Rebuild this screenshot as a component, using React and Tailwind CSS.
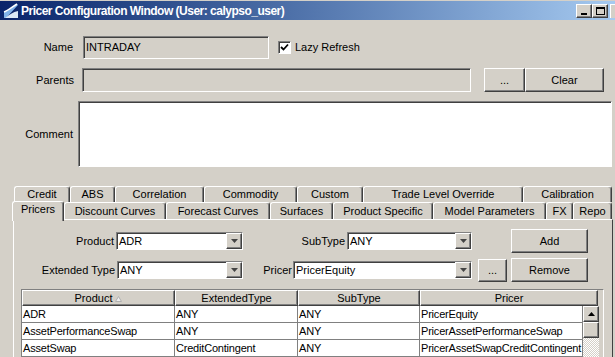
import React from 'react';

const raised =
  'border border-t-white border-l-white border-r-[#404040] border-b-[#404040] shadow-[inset_-1px_-1px_0_#808080]';
const sunken =
  'border border-t-[#808080] border-l-[#808080] border-r-white border-b-white shadow-[inset_1px_1px_0_#404040]';

const topTabs = [
  ['Credit', 56],
  ['ABS', 45],
  ['Correlation', 89],
  ['Commodity', 93],
  ['Custom', 66],
  ['Trade Level Override', 160],
  ['Calibration', 89],
];

const frontTabs = [
  ['Discount Curves', 102],
  ['Forecast Curves', 104],
  ['Surfaces', 63],
  ['Product Specific', 100],
  ['Model Parameters', 113],
  ['FX', 27],
  ['Repo', 39],
];

const rows = [
  ['ADR', 'ANY', 'ANY', 'PricerEquity'],
  ['AssetPerformanceSwap', 'ANY', 'ANY', 'PricerAssetPerformanceSwap'],
  ['AssetSwap', 'CreditContingent', 'ANY', 'PricerAssetSwapCreditContingent'],
];

function TitleBar() {
  return (
    <div className="h-[20px] border-t border-t-[#d4d0c8] flex items-center bg-gradient-to-r from-[#0a246a] to-[#a6caf0]">
      <svg width="16" height="16" viewBox="0 0 16 16" className="ml-[3px] shrink-0">
        <path d="M1 15 L1 9 C4 8 9 4 14 1 L15 2 C11 6 7 11 3 15 Z" fill="#7fb2e8" />
        <path d="M1 9 C4 8 9 4 14 1" stroke="#fff" strokeWidth="1.5" fill="none" />
        <path d="M2 15 C6 12 10 9 15 8 L15 15 Z" fill="#dce9f7" />
      </svg>
      <span className="ml-[2px] text-white font-bold text-[12px] tracking-[-0.5px] whitespace-nowrap">
        Pricer Configuration Window (User: calypso_user)
      </span>
      <div className="ml-auto flex items-center">
        <div className={`w-[16px] h-[14px] bg-[#d4d0c8] ${raised} flex items-end justify-center pb-[2px]`}>
          <div className="w-[6px] h-[2px] bg-black" />
        </div>
        <div className={`w-[16px] h-[14px] bg-[#d4d0c8] ${raised} flex items-center justify-center`}>
          <div className="w-[9px] h-[8px] border border-black border-t-2" />
        </div>
        <div className="ml-[2px] w-[5px] h-[14px] bg-[#d4d0c8] border-l border-t border-white" />
      </div>
    </div>
  );
}

function Button({ children, className = '' }) {
  return (
    <div className={`bg-[#d4d0c8] ${raised} flex items-center justify-center ${className}`}>{children}</div>
  );
}

function Combo({ value, className = '' }) {
  return (
    <div className={`h-[18px] bg-white ${sunken} flex items-center ${className}`}>
      <span className="pl-[2px] flex-1 whitespace-nowrap overflow-hidden">{value}</span>
      <div className={`w-[16px] h-[16px] bg-[#d4d0c8] ${raised} flex items-center justify-center`}>
        <svg width="7" height="4" viewBox="0 0 7 4">
          <path d="M0 0 H7 L3.5 4 Z" fill="#444" />
        </svg>
      </div>
    </div>
  );
}

function Tab({ label, width, className = '' }) {
  return (
    <div
      style={{ width }}
      className={`shrink-0 h-[16px] bg-[#d4d0c8] border-t border-l border-r border-t-white border-l-white border-r-[#404040] shadow-[inset_-1px_0_0_#808080] rounded-t-[3px] flex items-center justify-center whitespace-nowrap ${className}`}
    >
      {label}
    </div>
  );
}

export default function App() {
  return (
    <div className="w-[615px] h-[357px] overflow-hidden bg-[#d4d0c8] font-['Liberation_Sans',Arial,sans-serif] text-[11px] text-black leading-none">
      <TitleBar />

      <div className="flex items-center mt-[16px] h-[23px]">
        <span className="w-[73px] text-right">Name</span>
        <div className={`ml-[10px] w-[186px] h-[23px] ${sunken} flex items-center pl-[2px]`}>INTRADAY</div>
        <div className={`ml-[9px] w-[13px] h-[13px] bg-white ${sunken} flex items-center justify-center`}>
          <svg width="9" height="9" viewBox="0 0 9 9">
            <path d="M1 4 L3.5 6.5 L8 1.5" stroke="#000" strokeWidth="1.8" fill="none" />
          </svg>
        </div>
        <span className="ml-[4px]">Lazy Refresh</span>
      </div>

      <div className="flex items-center mt-[9px] h-[24px]">
        <span className="w-[74px] text-right">Parents</span>
        <div className={`ml-[8px] w-[389px] h-[24px] ${sunken}`} />
        <Button className="ml-[13px] w-[41px] h-[24px]">...</Button>
        <Button className="w-[79px] h-[24px]">Clear</Button>
      </div>

      <div className="flex items-center mt-[9px] h-[66px]">
        <span className="w-[73px] text-right">Comment</span>
        <div className={`ml-[5px] w-[534px] h-[66px] bg-white ${sunken}`} />
      </div>

      <div className="mt-[19px] ml-[14px] flex">
        {topTabs.map(([l, w]) => (
          <Tab key={l} label={l} width={w} />
        ))}
      </div>

      <div className="relative z-10 ml-[12px] flex items-end h-[17px]">
        <div className="w-[52px] h-[20px] -mt-[3px] bg-[#d4d0c8] border-t border-l border-r border-t-white border-l-white border-r-[#404040] shadow-[inset_-1px_0_0_#808080] rounded-t-[3px] flex items-start justify-center pt-[2px] -mb-[2px]">
          Pricers
        </div>
        {frontTabs.map(([l, w]) => (
          <Tab key={l} label={l} width={w} className="h-[17px]" />
        ))}
      </div>

      <div className="ml-[13px] w-[600px] h-[200px] border-t border-l border-r border-t-white border-l-white border-r-[#404040]">
        <div className="flex items-center mt-[9px] h-[24px]">
          <span className="w-[100px] text-right">Product</span>
          <Combo value="ADR" className="ml-[2px] w-[127px]" />
          <span className="w-[102px] text-right">SubType</span>
          <Combo value="ANY" className="ml-[2px] w-[125px]" />
          <Button className="ml-[39px] w-[77px] h-[24px]">Add</Button>
        </div>

        <div className="flex items-center mt-[5px] h-[24px]">
          <span className="w-[101px] text-right">Extended Type</span>
          <Combo value="ANY" className="ml-[2px] w-[126px]" />
          <span className="w-[49px] text-right">Pricer</span>
          <Combo value="PricerEquity" className="ml-[1px] w-[179px]" />
          <Button className="ml-[6px] w-[29px] h-[23px]">...</Button>
          <Button className="ml-[4px] w-[77px] h-[24px]">Remove</Button>
        </div>

        <div className="mt-[7px] ml-[7px] w-[583px] border border-t-[#808080] border-l-[#808080] border-r-white border-b-white">
          <div className="flex h-[16px]">
            {[
              ['Product', 153],
              ['ExtendedType', 123],
              ['SubType', 122],
              ['Pricer', 178],
            ].map(([h, w]) => (
              <div
                key={h}
                style={{ width: w }}
                className={`shrink-0 bg-[#d4d0c8] ${raised} flex items-center justify-center`}
              >
                {h}
                {h === 'Product' && (
                  <svg width="7" height="6" viewBox="0 0 7 6" className="ml-[3px] mt-[2px]">
                    <path d="M0.5 5.5 L3.5 0.5 L6.5 5.5 Z" fill="#eee" stroke="#b0b0b0" />
                  </svg>
                )}
              </div>
            ))}
          </div>
          <div className="flex">
            <div>
              {rows.map((r) => (
                <div key={r[0]} className="flex h-[17px] bg-white">
                  {r.map((c, i) => (
                    <div
                      key={i}
                      style={{ width: [153, 123, 122, 163][i] }}
                      className="shrink-0 border-r border-b border-[#808080] flex items-center pl-[1px] tracking-[-0.2px] whitespace-nowrap overflow-hidden"
                    >
                      {c}
                    </div>
                  ))}
                </div>
              ))}
            </div>
            <div className="w-[16px] bg-[repeating-conic-gradient(#ffffff_0_25%,#d4d0c8_0_50%)] bg-[length:2px_2px]">
              <div className={`h-[16px] bg-[#d4d0c8] ${raised} flex items-center justify-center`}>
                <svg width="7" height="4" viewBox="0 0 7 4">
                  <path d="M0 4 H7 L3.5 0 Z" fill="#000" />
                </svg>
              </div>
              <div className={`h-[16px] bg-[#d4d0c8] ${raised}`} />
            </div>
          </div>
        </div>
      </div>
    </div>
  );
}
